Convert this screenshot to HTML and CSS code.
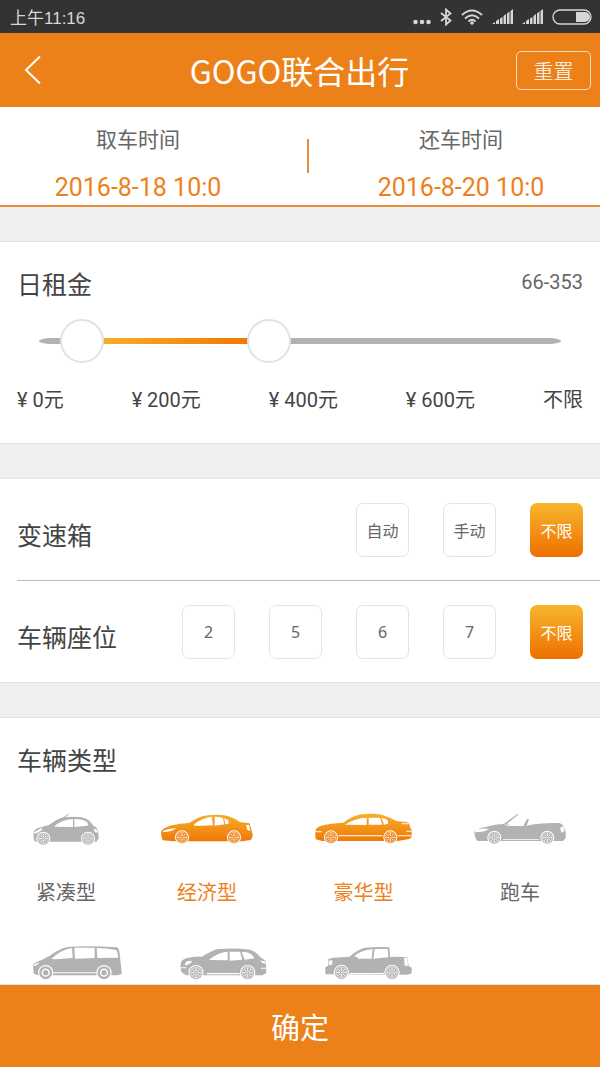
FILE: index.html
```html
<!DOCTYPE html>
<html lang="zh-CN">
<head>
<meta charset="utf-8">
<meta name="viewport" content="width=device-width, initial-scale=1">
<title>GOGO联合出行</title>
<link rel="stylesheet" href="styles.css">
</head>
<body>
<svg class="defs" width="0" height="0" aria-hidden="true">
  <defs>
    <linearGradient id="glow" gradientUnits="userSpaceOnUse" x1="0" y1="38" x2="0" y2="128">
      <stop offset="0" stop-color="#f7b02c"/>
      <stop offset="1" stop-color="#ee7303"/>
    </linearGradient>
    <symbol id="wheel" viewBox="-22 -22 44 44" overflow="visible">
      <circle r="21" fill="#fff"/>
      <circle r="18" fill="currentColor"/>
      <circle r="14.5" fill="none" stroke="#fff" stroke-width="1.6"/>
      <path d="M0-13V-4M0 4V13M-13 0H-4M4 0H13M-9-9L-3-3M3 3L9 9M9-9L3-3M-3 3L-9 9" stroke="#fff" stroke-width="2.6"/>
      <circle r="1.5" fill="#fff"/>
    </symbol>
    <symbol id="signal" viewBox="0 0 21 15">
      <path d="M0 15L3 13V15ZM4 15V12L7 10V15ZM8 15V9.500L10.500 8V15ZM11.500 15V7L14 5V15ZM15 15V4.500L17.500 2.500V15ZM18.500 15V2L21 0V15Z" fill="currentColor"/>
    </symbol>
  </defs>
</svg>

<div class="status">
  <span class="status-time">上午11:16</span>
  <div class="status-icons">
    <svg width="18" height="16" viewBox="0 0 18 16"><g fill="currentColor"><circle cx="2.500" cy="13" r="2.300"/><circle cx="9" cy="13" r="2.300"/><circle cx="15.500" cy="13" r="2.300"/></g></svg>
    <svg width="12" height="18" viewBox="0 0 12 18"><path d="M1 5L10.500 12.500L6 16.500V1.500L10.500 5.500L1 13" fill="none" stroke="currentColor" stroke-width="1.800"/></svg>
    <svg width="22" height="16" viewBox="0 0 22 16"><g fill="none" stroke="currentColor" stroke-width="2"><path d="M1 6Q11-3 21 6"/><path d="M4 9.500Q11 3 18 9.500"/><path d="M7.500 12.500Q11 9 14.500 12.500"/></g><circle cx="11" cy="14" r="1.800" fill="currentColor"/></svg>
    <svg width="21" height="15"><use href="#signal"/></svg>
    <svg width="21" height="15"><use href="#signal"/></svg>
    <svg width="40" height="16" viewBox="0 0 40 16"><rect x="1" y="1" width="38" height="14" rx="7" fill="none" stroke="currentColor" stroke-width="1.300"/><path d="M24 3H33A5 5 0 0 1 33 13H24Z" fill="currentColor"/></svg>
  </div>
</div>

<header class="topbar">
  <button class="back" type="button" aria-label="返回"><svg width="18" height="30" viewBox="0 0 18 30"><path d="M16 1.500L2 15L16 28.500" fill="none" stroke="currentColor" stroke-width="2"/></svg></button>
  <h1 class="title">GOGO联合出行</h1>
  <button class="reset" type="button">重置</button>
</header>

<main class="content">
  <section class="dates">
    <div class="date date-from"><span class="date-name">取车时间</span><span class="date-value">2016-8-18 10:0</span></div>
    <div class="date-rule"></div>
    <div class="date date-to"><span class="date-name">还车时间</span><span class="date-value">2016-8-20 10:0</span></div>
  </section>

  <section class="card price">
    <div class="price-head"><h2 class="heading">日租金</h2><output class="price-range">66-353</output></div>
    <div class="slider">
      <div class="track"><div class="fill" style="margin-left:8.25%;width:35.9%"></div></div>
      <input class="range" type="range" min="0" max="800" value="66" aria-label="最低日租金">
      <input class="range" type="range" min="0" max="800" value="353" aria-label="最高日租金">
    </div>
    <div class="scale"><span>¥ 0元</span><span>¥ 200元</span><span>¥ 400元</span><span>¥ 600元</span><span>不限</span></div>
  </section>

  <section class="card">
    <div class="row">
      <h2 class="heading">变速箱</h2>
      <div class="options">
        <button class="option" type="button">自动</button>
        <button class="option" type="button">手动</button>
        <button class="option selected" type="button">不限</button>
      </div>
    </div>
    <div class="row row-next">
      <h2 class="heading">车辆座位</h2>
      <div class="options">
        <button class="option" type="button">2</button>
        <button class="option" type="button">5</button>
        <button class="option" type="button">6</button>
        <button class="option" type="button">7</button>
        <button class="option selected" type="button">不限</button>
      </div>
    </div>
  </section>

  <section class="card types">
    <h2 class="heading">车辆类型</h2>
    <div class="cars">
      <button class="car" type="button">
        <svg width="66" height="32" viewBox="100 36 198 96">
          <path d="M184 54L207 38L209 40L190 54Z" fill="currentColor"/>
          <path d="M104 119Q100 108 102 94Q104 85 115 81Q132 76 148 72Q174 53 192 49Q222 45 246 49Q261 52 270 60L282 75Q295 81 296 92L297 112L291 122H108Z" fill="currentColor"/>
          <path d="M163 77Q185 56 220 54V78ZM224 54Q250 54 262 63Q267 69 264 74L224 78ZM103 94L123 82L129 83Q122 94 104 98ZM282 82L294 88V95L285 93Z" fill="#fff"/>
          <use href="#wheel" x="109" y="91" width="44" height="44"/><use href="#wheel" x="243" y="91" width="44" height="44"/>
        </svg>
        <span>紧凑型</span>
      </button>
      <button class="car chosen" type="button">
        <svg width="92" height="32" viewBox="32 36 276 96">
          <path d="M37 118Q31 103 33 90Q43 78 65 73Q90 67 116 66Q145 47 163 44Q202 38 233 45Q252 51 270 64L295 66Q300 67 299 72L307 100Q307 113 300 117L275 121H70Z" fill="url(#glow)"/>
          <path d="M130 71Q153 51 184 47L188 73L135 75ZM193 47Q216 47 234 58L235 68L193 74ZM38 90Q56 81 78 82Q63 94 38 93ZM287 72L296 72L300 90L291 87Z" fill="#fff"/>
          <path d="M219 48L224 72" stroke="#f0982a" stroke-width="3"/>
          <use href="#wheel" x="73" y="87" width="44" height="44"/><use href="#wheel" x="229" y="87" width="44" height="44"/>
        </svg>
        <span>经济型</span>
      </button>
      <button class="car chosen" type="button">
        <svg width="97" height="32" viewBox="47 36 291 96">
          <path d="M50 115Q46 102 49 89Q49 80 66 74Q92 67 132 65Q157 46 178 41Q213 36 248 41Q269 48 291 60L325 64Q331 67 333 82L337 86V106Q337 112 325 115L295 120H68Z" fill="url(#glow)"/>
          <path d="M137 71Q166 51 202 50V72ZM208 50H242L249 71H208ZM247 51Q259 51 266 59V68L254 71ZM49 91H67V94H49ZM321 89H337V92H321ZM118 103H249V106H118ZM296 103H337V106H296ZM306 67H327V70H309Z" fill="#fff"/>
          <use href="#wheel" x="73" y="87" width="44" height="44"/><use href="#wheel" x="251" y="87" width="44" height="44"/>
        </svg>
        <span>豪华型</span>
      </button>
      <button class="car" type="button">
        <svg width="92" height="32" viewBox="74 36 276 96">
          <path d="M163 69L204 39L208 40L174 67L183 75H222L233 54L239 55L232 74Q275 64 330 66Q341 69 343 78L349 91V112L341 120H84Q75 109 75 90Q92 80 121 75Q143 69 163 69Z" fill="currentColor"/>
          <path d="M77 88Q97 79 119 84Q105 94 77 94ZM332 80L342 76L345 91L337 95ZM161 115H269V117H161ZM163 70L182 72L178 76Z" fill="#fff"/>
          <use href="#wheel" x="113" y="88" width="44" height="44"/><use href="#wheel" x="272" y="88" width="44" height="44"/>
        </svg>
        <span>跑车</span>
      </button>
    </div>
    <div class="cars cars-next">
      <button class="car" type="button" aria-label="商务型">
        <svg width="89" height="34" viewBox="99 48 267 102">
          <path d="M101 130L99 104Q107 95 125 90Q147 80 166 66Q186 53 209 50Q278 47 350 52Q358 55 359 71L365 126V133L350 136H112Z" fill="currentColor"/>
          <path d="M154 87Q183 59 216 54L218 84L166 88ZM223 53H284V84L225 86ZM290 54Q320 54 348 60Q353 64 355 83L292 84ZM101 104L118 96Q115 105 101 109ZM157 127H291V130H157Z" fill="#fff"/>
          <g><circle cx="137" cy="128" r="23" fill="#fff"/><circle cx="137" cy="128" r="16" fill="none" stroke="currentColor" stroke-width="7"/><circle cx="137" cy="128" r="8" fill="currentColor"/></g>
          <g><circle cx="312" cy="128" r="23" fill="#fff"/><circle cx="312" cy="128" r="16" fill="none" stroke="currentColor" stroke-width="7"/><circle cx="312" cy="128" r="8" fill="currentColor"/></g>
        </svg>
      </button>
      <button class="car" type="button" aria-label="越野车">
        <svg width="87" height="34" viewBox="541 48 261 102">
          <path d="M545 126Q541 111 544 98Q545 90 559 85Q583 79 607 80Q638 60 657 57Q709 53 751 59Q771 66 785 84Q800 91 799 103L800 129L789 136H559Z" fill="currentColor"/>
          <path d="M628 90Q656 66 684 65V91ZM690 65H721L728 89L690 92ZM726 65Q747 66 755 73L765 85L735 89ZM555 103L561 94L578 92Q572 103 557 106ZM782 91L797 95V102L787 98ZM621 129H720V133H621ZM544 112H560V115H544ZM784 113H799V116H784Z" fill="#fff"/>
          <use href="#wheel" x="565" y="104" width="48" height="48"/><use href="#wheel" x="720" y="104" width="48" height="48"/>
        </svg>
      </button>
      <button class="car" type="button" aria-label="皮卡">
        <svg width="87" height="34" viewBox="107 48 261 102">
          <path d="M108 133V112L116 107L117 87L132 83L180 80Q203 61 223 54Q259 49 300 52L302 80L354 81L358 108L367 113V130L355 134Z" fill="currentColor"/>
          <path d="M194 79Q214 61 250 57L247 86H206Q205 80 194 79ZM256 57H295L297 82L252 86ZM118 92L129 91V104L118 106ZM344 83L354 83L356 107L346 107ZM181 129H284V132H181Z" fill="#fff"/>
          <use href="#wheel" x="132" y="103" width="48" height="48"/><use href="#wheel" x="284" y="103" width="48" height="48"/>
        </svg>
      </button>
    </div>
  </section>
</main>

<button class="confirm" type="button">确定</button>
</body>
</html>
```
FILE: styles.css
```css
* { box-sizing: border-box; }

body {
  margin: 0;
  height: 100vh;
  display: flex;
  flex-direction: column;
  background: #efefef;
  color: #444;
  font-family: Roboto, "Noto Sans CJK SC", sans-serif;
  font-size: 20px;
}

button {
  margin: 0;
  padding: 0;
  border: 0;
  background: none;
  color: inherit;
  font: inherit;
  cursor: pointer;
}

svg { display: block; }

.defs { position: absolute; }

.status {
  flex: none;
  display: flex;
  align-items: center;
  justify-content: space-between;
  height: 33px;
  padding: 0 8px 0 10px;
  background: #333;
  color: #d6d6d6;
}

.status-time {
  font-family: "Liberation Sans", "Noto Sans CJK SC", sans-serif;
  font-size: 17px;
}

.status-icons {
  display: flex;
  align-items: center;
  gap: 9px;
}

.topbar {
  flex: none;
  display: grid;
  grid-template-columns: 1fr auto 1fr;
  align-items: center;
  height: 74px;
  padding: 0 9px 0 24px;
  background: #ed8119;
  color: #fff;
}

.back { justify-self: start; }

.title {
  margin: 0;
  padding-right: 16px;
  font-family: "Noto Sans CJK SC", sans-serif;
  font-size: 32px;
  font-weight: 400;
  line-height: 40px;
}

.reset {
  justify-self: end;
  width: 75px;
  height: 39px;
  border: 1px solid #fbdcb8;
  border-radius: 5px;
  font-weight: 300;
}

.content {
  flex: 1;
  min-height: 0;
  overflow-y: auto;
  scrollbar-width: none;
}

.dates {
  display: grid;
  grid-template-columns: 307fr 2px 291fr;
  padding: 19px 0 3px;
  border-bottom: 2px solid #e58e3c;
  background: #fff;
}

.date {
  display: flex;
  flex-direction: column;
  align-items: center;
  gap: 20px;
}

.date-from { padding-right: 31px; }
.date-to { padding-left: 13px; }

.date-name {
  color: #666;
  font-size: 21px;
  line-height: 28px;
}

.date-value {
  color: #ed8119;
  font-size: 25px;
  line-height: 28px;
}

.date-rule {
  height: 34px;
  margin-top: 13px;
  background: #e58e3c;
}

.card {
  margin-top: 34px;
  border-top: 1px solid #e4e4e4;
  border-bottom: 1px solid #e4e4e4;
  background: #fff;
}

.heading {
  margin: 0;
  font-size: 25px;
  font-weight: 400;
  line-height: 40px;
}

.price { padding: 24px 17px 28px; }

.price-head {
  display: flex;
  justify-content: space-between;
}

.price-range {
  color: #666;
  line-height: 32px;
}

.slider {
  display: grid;
  align-items: center;
  margin-top: 13px;
}

.slider > * { grid-area: 1 / 1; }

.track {
  height: 6px;
  margin: 0 22px;
  border-radius: 12px / 3px;
  background: #b2b2b2;
}

.fill {
  height: 6px;
  background: linear-gradient(90deg, #f8b62d, #f07000);
}

.range {
  width: 100%;
  height: 44px;
  margin: 0;
  appearance: none;
  background: none;
  pointer-events: none;
}

.range::-webkit-slider-thumb {
  appearance: none;
  width: 44px;
  height: 44px;
  border: 2px solid #e2e2e2;
  border-radius: 50%;
  background: #fff;
  pointer-events: auto;
}

.scale {
  display: flex;
  justify-content: space-between;
  margin-top: 22px;
  line-height: 30px;
}

.row {
  display: flex;
  align-items: flex-end;
  justify-content: space-between;
  padding: 24px 17px 23px 0;
  margin-left: 17px;
}

.row-next { border-top: 1px solid #bbb; }

.options {
  display: flex;
  gap: 34px;
}

.option {
  width: 53px;
  height: 54px;
  border: 1px solid #e4e4e4;
  border-radius: 7px;
  color: #666;
  font-family: "Noto Sans", "Noto Sans CJK SC", sans-serif;
  font-size: 16px;
}

.option.selected {
  border: 0;
  background: linear-gradient(#f8b62d, #ee6f00);
  color: #fff;
}

.types { padding: 24px 17px 4px; }

.cars {
  display: flex;
  gap: 62px;
  margin-top: 31px;
  padding-left: 16px;
}

.cars-next {
  gap: 58px;
  margin-top: 39px;
}

.car {
  display: flex;
  flex-direction: column;
  align-items: center;
  gap: 34px;
  color: #b2b2b2;
  line-height: 28px;
}

.car span { color: #666; }

.car.chosen,
.chosen span { color: #ed8119; }

.confirm {
  flex: none;
  height: 82px;
  background: #ed8119;
  color: #fff;
  font-size: 29px;
}
```
